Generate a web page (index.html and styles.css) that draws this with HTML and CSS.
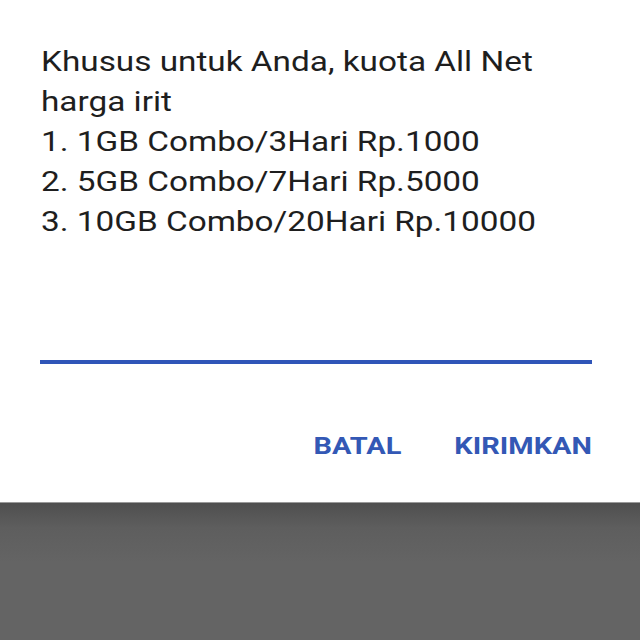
FILE: index.html
```html
<!DOCTYPE html>
<html lang="id">
<head>
  <meta charset="UTF-8">
  <meta name="viewport" content="width=device-width, initial-scale=1.0">
  <title>Pesan</title>
  <link rel="stylesheet" href="styles.css">
</head>
<body>
  <div class="dialog">
    <div class="message">
      <p>Khusus untuk Anda, kuota All Net harga irit</p>
      <p>1. 1GB Combo/3Hari Rp.1000</p>
      <p>2. 5GB Combo/7Hari Rp.5000</p>
      <p>3. 10GB Combo/20Hari Rp.10000</p>
    </div>

    <div class="reply-field"></div>

    <div class="actions">
      <button class="action-btn">BATAL</button>
      <button class="action-btn">KIRIMKAN</button>
    </div>
  </div>

  <div class="backdrop"></div>
</body>
</html>
```

FILE: styles.css
```css
body {
  margin: 0;
  font-family: Roboto, "Noto Sans", sans-serif;
  background-color: #646464;
}

.dialog {
  height: 502px;
  box-sizing: border-box;
  background-color: #fff;
  padding: 42px 48px 0 40px;
  display: flex;
  flex-direction: column;
}

.message {
  width: 420px;
  margin-left: 1px;
  font-size: 28px;
  line-height: 40px;
  color: #1e1e1e;
  transform: scaleX(1.19);
  transform-origin: left top;
}

.message p {
  margin: 0;
}

.reply-field {
  margin-top: 118px;
  height: 4px;
  background-color: #2f55b8;
}

.actions {
  display: flex;
  justify-content: flex-end;
  gap: 42px;
  margin-top: 68px;
  transform: scaleX(1.26);
  transform-origin: right top;
}

.action-btn {
  padding: 0;
  border: none;
  background: none;
  font-family: Roboto, "Noto Sans", sans-serif;
  font-size: 23px;
  font-weight: 700;
  color: #3358b5;
  line-height: 30px;
  cursor: pointer;
}

.backdrop {
  height: 138px;
  border-top: 1px solid #9a9a9a;
  background: linear-gradient(to bottom, #4f4f4f 0, #5e5e5e 25px, #646464 60px);
}
```
